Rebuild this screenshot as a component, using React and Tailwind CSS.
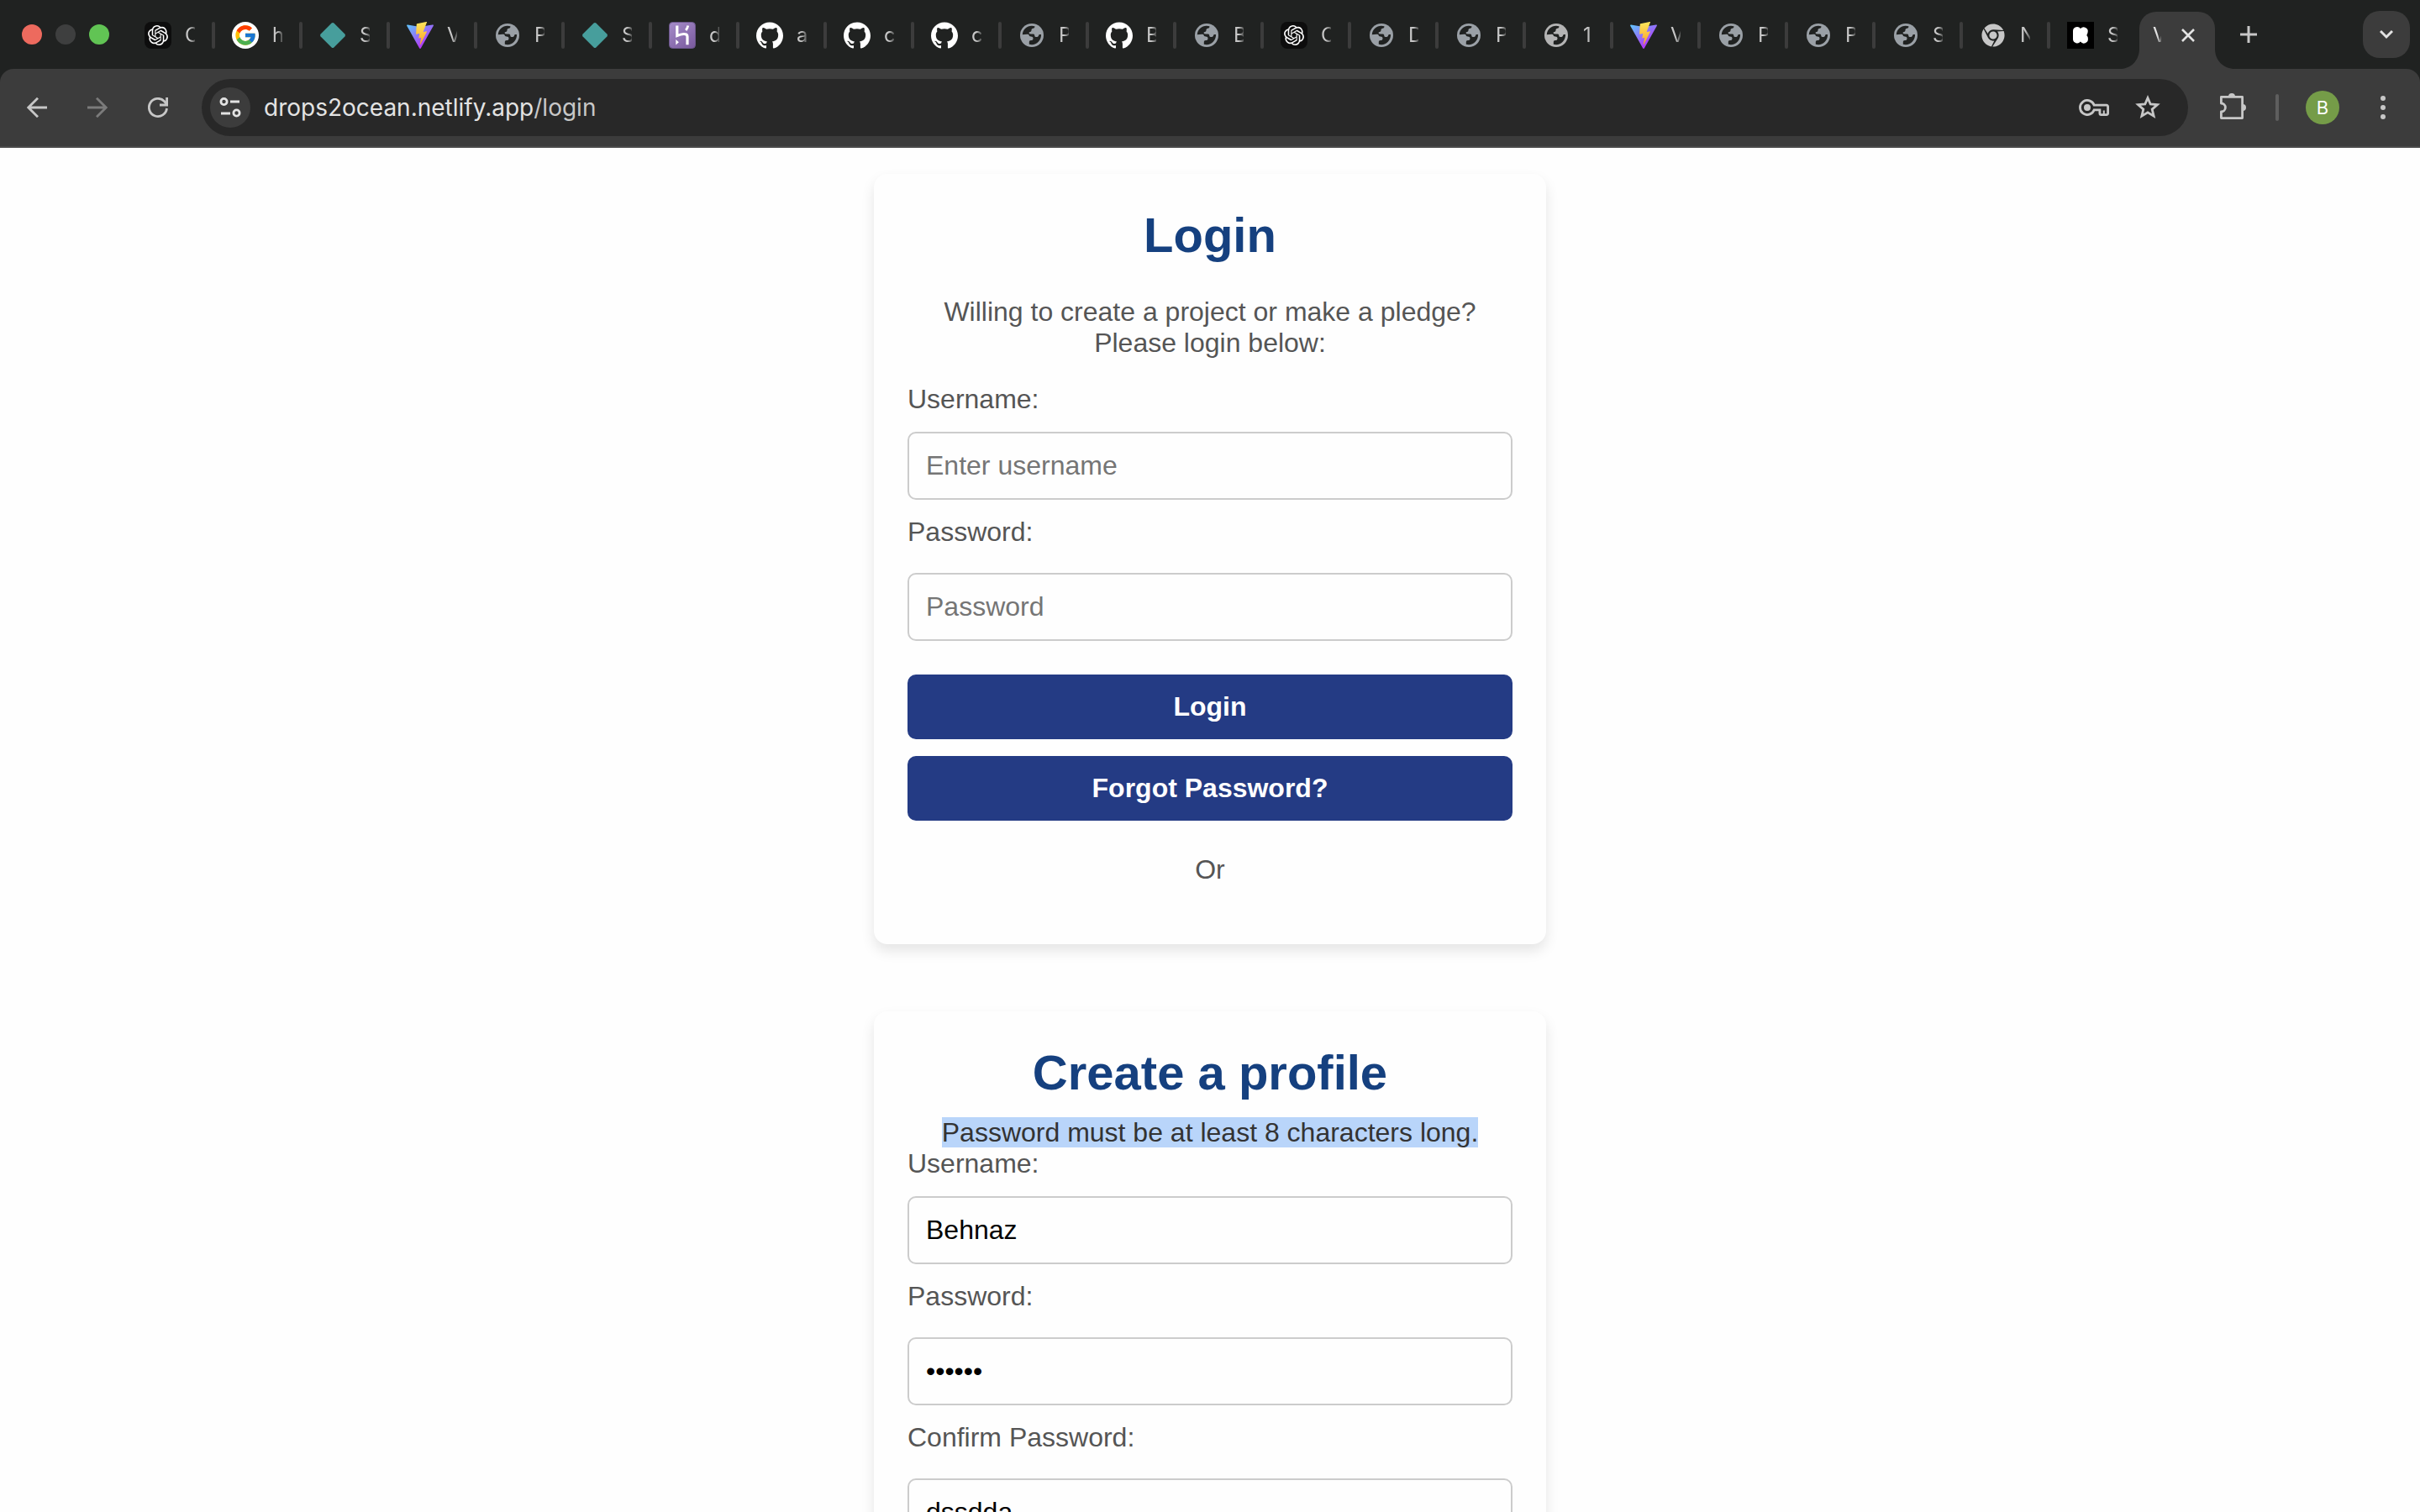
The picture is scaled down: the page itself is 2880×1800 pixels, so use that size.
import { FcGoogle } from "react-icons/fc";
import { SiOpenai, SiGithub } from "react-icons/si";
import { FaChrome } from "react-icons/fa";

function OpenAiIcon() {
  return (
    <span className="flex size-8 items-center justify-center rounded-lg bg-[#0d0d0d]">
      <SiOpenai className="size-6 text-white" />
    </span>
  );
}

function GoogleIcon() {
  return (
    <span className="flex size-8 items-center justify-center rounded-full bg-white">
      <FcGoogle className="size-7" />
    </span>
  );
}

function DiamondIcon() {
  return (
    <svg viewBox="0 0 32 32" className="size-8">
      <path
        d="M14.6 1.6Q16 .4 17.4 1.6L30.4 14.6Q31.6 16 30.4 17.4L17.4 30.4Q16 31.6 14.6 30.4L1.6 17.4Q.4 16 1.6 14.6Z"
        fill="#479e9c"
      />
    </svg>
  );
}

function ViteIcon() {
  return (
    <svg viewBox="0 0 32 32" className="size-8">
      <defs>
        <linearGradient id="vite-body" x1="0" y1="2" x2="19" y2="28" gradientUnits="userSpaceOnUse">
          <stop offset="0" stopColor="#5bcdfd" />
          <stop offset="1" stopColor="#b23bf6" />
        </linearGradient>
        <linearGradient id="vite-bolt" x1="16" y1="1" x2="18" y2="26" gradientUnits="userSpaceOnUse">
          <stop offset="0" stopColor="#ffe45a" />
          <stop offset="1" stopColor="#f9a62b" />
        </linearGradient>
      </defs>
      <path d="M31.8 4.7 16.8 31.4a.9.9 0 0 1-1.6 0L.2 4.7A.9.9 0 0 1 1.1 3.4L16 6l14.8-2.6a.9.9 0 0 1 1 1.3Z" fill="url(#vite-body)" />
      <path d="M23.3.1 12.2 2.2a.5.5 0 0 0-.4.4L11.1 14.3a.4.4 0 0 0 .5.4l3.1-.7a.4.4 0 0 1 .5.5l-.9 4.5a.4.4 0 0 0 .5.5l1.9-.6a.4.4 0 0 1 .5.5L15.7 26.5c-.1.4.5.7.7.3L23.9 11.9a.4.4 0 0 0-.4-.6l-3.2.6a.4.4 0 0 1-.5-.5L23.9.7a.4.4 0 0 0-.6-.6Z" fill="url(#vite-bolt)" />
    </svg>
  );
}

function GlobeIcon({ light }) {
  return (
    <svg viewBox="0 0 32 32" className={light ? "size-8 text-[#b4b4b4]" : "size-8 text-[#9aa0a6]"}>
      <circle cx="16" cy="16" r="14" fill="currentColor" />
      <path
        d="M4.8 15.2C5.2 9.2 10 4.9 16 4.8l3.4.4c.2 1.5-.6 2.2-1.9 2.6-1.3.4-2 .9-2 2.2 0 1.2-.5 1.7-1.6 1.9-1.1.2-1.5.8-1.2 1.7.2.7.9.9 1.9.9h2.6c1.4 0 2 .6 2.1 1.9.1 1.2.8 1.7 2.2 1.7 1.6 0 2.3-.8 2.6-1.9.3-1.1 1.4-1.3 3-.9C27 22 22 27.2 16 27.2l-3.2-.4v-2.6c0-1.5.7-2.2 2.2-2.2 1.7 0 2.5-.8 2.5-2.3 0-1.6-.9-2.3-2.6-2.3-1.5 0-2.2-.7-2.3-1.6-.2-.9-1-1.1-2.3-1.1Z"
        fill="#202221"
      />
    </svg>
  );
}

function HerokuIcon() {
  return (
    <svg viewBox="0 0 32 32" className="size-8">
      <defs>
        <linearGradient id="heroku-bg" x1="4" y1="0" x2="28" y2="32" gradientUnits="userSpaceOnUse">
          <stop offset="0" stopColor="#a48bc8" />
          <stop offset="1" stopColor="#7a5a9e" />
        </linearGradient>
      </defs>
      <rect x=".5" y=".5" width="31" height="31" rx="4" fill="url(#heroku-bg)" stroke="#6b568a" />
      <path d="M9.8 4.5v12c4-1.6 12.2-4 12.2 1v9.7" fill="none" stroke="#fff" strokeWidth="3.2" />
      <path d="M22.8 4.5c-.4 2.1-1.3 3.9-2.6 5.5" fill="none" stroke="#fff" strokeWidth="2.8" />
      <path d="M8.3 21v6.5l3.6-3.2Z" fill="#fff" />
    </svg>
  );
}

function GithubIcon() {
  return <SiGithub className="size-8 text-white" />;
}

function ChromeIcon() {
  return (
    <span className="flex size-8 items-center justify-center">
      <FaChrome className="size-7 text-[#c7c7c7]" />
    </span>
  );
}

function KickstarterIcon() {
  return (
    <svg viewBox="0 0 32 32" className="size-8">
      <rect width="32" height="32" fill="#000" />
      <path
        d="M7 11a5 5 0 0 1 9-3 5 5 0 0 1 8.6 4.5c-.2 1.3-.7 2.4-1.3 3.5 1 1.2 1.6 2.4 1.6 4a5 5 0 0 1-9 3.5A5 5 0 0 1 7 21Z"
        fill="#fff"
      />
    </svg>
  );
}

const ICONS = {
  openai: OpenAiIcon,
  google: GoogleIcon,
  diamond: DiamondIcon,
  vite: ViteIcon,
  globe: GlobeIcon,
  heroku: HerokuIcon,
  github: GithubIcon,
  chrome: ChromeIcon,
  kickstarter: KickstarterIcon,
};

const TABS = [
  ["openai", "C"],
  ["google", "h"],
  ["diamond", "S"],
  ["vite", "V"],
  ["globe", "P"],
  ["diamond", "S"],
  ["heroku", "d"],
  ["github", "a"],
  ["github", "c"],
  ["github", "c"],
  ["globe", "P"],
  ["github", "B"],
  ["globe", "B"],
  ["openai", "C"],
  ["globe", "D"],
  ["globe", "P"],
  ["globe", "1", true],
  ["vite", "V"],
  ["globe", "P"],
  ["globe", "P"],
  ["globe", "S"],
  ["chrome", "N"],
  ["kickstarter", "S"],
];

const titleClass =
  "overflow-hidden text-left text-[24px] leading-[32px] [mask-image:linear-gradient(to_right,black_50%,transparent_120%)]";

function Tab({ icon, title, light, last }) {
  const Icon = ICONS[icon];
  return (
    <button type="button" className="flex h-full w-[104px] items-center pl-5 pt-0.5">
      <Icon light={light} />
      <span className={`${titleClass} ml-4 w-3 text-[#c7c7c7]`}>{title}</span>
      {!last && <span className="ml-auto h-8 w-1 rounded-sm bg-[#3c3c3c]" />}
    </button>
  );
}

function TabFoot({ className, d }) {
  return (
    <svg viewBox="0 0 24 24" className={`absolute bottom-0 size-6 text-[#3c3c3c] ${className}`}>
      <path d={d} fill="currentColor" />
    </svg>
  );
}

function TabStrip() {
  return (
    <div className="flex h-[82px] items-center bg-[#202221]">
      <div className="ml-[26px] mr-[22px] flex gap-4">
        <button type="button" aria-label="Close window" className="size-6 rounded-full bg-[#ed6a5e]" />
        <button type="button" aria-label="Minimise window" className="size-6 rounded-full bg-[#3e3f3f]" />
        <button type="button" aria-label="Zoom window" className="size-6 rounded-full bg-[#61c454]" />
      </div>
      <nav className="flex h-full">
        {TABS.map(([icon, title, light], i) => (
          <Tab key={i} icon={icon} title={title} light={light} last={i === TABS.length - 1} />
        ))}
      </nav>
      <div className="relative ml-0.5 flex h-[68px] w-[90px] items-center justify-between self-end rounded-t-[20px] bg-[#3c3c3c] pb-3 pl-4 pr-6">
        <TabFoot className="-left-6" d="M24 0v24H0C14 24 24 14 24 0Z" />
        <TabFoot className="-right-6" d="M0 0v24h24C10 24 0 14 0 0Z" />
        <span className={`${titleClass} w-2.5 text-[#e3e3e3]`}>V</span>
        <button type="button" aria-label="Close tab">
          <svg viewBox="0 0 16 16" className="size-4">
            <path d="M1 1l14 14M15 1 1 15" stroke="#e3e3e3" strokeWidth="2.6" />
          </svg>
        </button>
      </div>
      <button type="button" aria-label="New tab" className="ml-[30px]">
        <svg viewBox="0 0 20 20" className="size-5">
          <path d="M10 0v20M0 10h20" stroke="#c7c7c7" strokeWidth="3" />
        </svg>
      </button>
      <button
        type="button"
        aria-label="Search tabs"
        className="ml-auto mr-3 flex size-14 items-center justify-center rounded-[20px] bg-[#3c3c3c]"
      >
        <svg viewBox="0 0 16 16" className="size-4">
          <path d="M1 4l7 7 7-7" fill="none" stroke="#e3e3e3" strokeWidth="3" />
        </svg>
      </button>
    </div>
  );
}

function Toolbar() {
  return (
    <div className="bg-[#202221]">
      <div className="flex h-[94px] items-center rounded-t-[16px] border-b-2 border-[#4a4a4a] bg-[#3c3c3c] pl-8 pr-7">
        <button type="button" aria-label="Back">
          <svg viewBox="0 0 24 24" className="size-6">
            <path d="M13 .8 1.8 12 13 23.2M1.8 12H24" fill="none" stroke="#c7c7c7" strokeWidth="2.8" />
          </svg>
        </button>
        <button type="button" aria-label="Forward" className="ml-12">
          <svg viewBox="0 0 24 24" className="size-6">
            <path d="M11 .8 22.2 12 11 23.2M22.2 12H0" fill="none" stroke="#7b7b7b" strokeWidth="2.8" />
          </svg>
        </button>
        <button type="button" aria-label="Reload" className="ml-12">
          <svg viewBox="0 0 24 24" className="size-6">
            <path d="M22.5 13A10.6 10.6 0 1 1 19.5 4.5L22 7.5" fill="none" stroke="#c7c7c7" strokeWidth="2.8" />
            <path d="M22.6 0v9H14" fill="none" stroke="#c7c7c7" strokeWidth="2.8" />
          </svg>
        </button>
        <div className="ml-10 flex h-[68px] flex-1 items-center rounded-full bg-[#282828] pl-2.5 pr-8">
          <button
            type="button"
            aria-label="View site information"
            className="flex size-12 items-center justify-center rounded-full bg-[#3c3c3c]"
          >
            <svg viewBox="0 0 26 24" className="h-6 w-[26px]" fill="none" stroke="#e3e3e3" strokeWidth="2.8">
              <circle cx="5.5" cy="5" r="3.6" />
              <path d="M13 5h11M2 19h11" />
              <circle cx="20.5" cy="18.5" r="3.6" />
            </svg>
          </button>
          <a href="#login" className="ml-4 text-[28px] leading-[36px] text-[#e3e3e3]">
            drops2ocean.netlify.app<span className="text-[#c7c7c7]">/login</span>
          </a>
          <button type="button" aria-label="Manage passwords" className="ml-auto">
            <svg viewBox="0 0 36 20" className="h-5 w-9" fill="none" stroke="#c7c7c7" strokeWidth="2.8">
              <path d="M18.2 7.2H33a1.6 1.6 0 0 1 1.6 1.6V17a1.6 1.6 0 0 1-1.6 1.6h-6.5a1.6 1.6 0 0 1-1.6-1.6v-4.2h-6.7a8.6 8.6 0 1 1 0-5.6Z" />
              <circle cx="10" cy="10" r="4" fill="#c7c7c7" stroke="none" />
              <path d="M29.8 18v-4.5" strokeWidth="2" />
            </svg>
          </button>
          <button type="button" aria-label="Bookmark this tab" className="ml-[30px]">
            <svg viewBox="0 0 32 32" className="size-8">
              <path
                d="M16 4.5 19.2 12l8.2.7-6.2 5.4 1.9 8-7.1-4.3-7.1 4.3 1.9-8-6.2-5.4 8.2-.7Z"
                fill="none"
                stroke="#c7c7c7"
                strokeWidth="2.8"
              />
            </svg>
          </button>
        </div>
        <button type="button" aria-label="Extensions" className="ml-9">
          <svg viewBox="0 0 36 36" className="size-9">
            <path
              d="M3.4 5.4h25.2v25.2H3.4V23a5 5 0 0 0 0-10Z"
              fill="none"
              stroke="#c7c7c7"
              strokeWidth="2.8"
              strokeLinejoin="round"
            />
            <path d="M12 5a4 4 0 0 1 8 0ZM29 14a4 4 0 0 1 0 8Z" fill="#c7c7c7" />
          </svg>
        </button>
        <span className="ml-8 h-8 w-1 rounded-sm bg-[#5e5e5e]" />
        <button
          type="button"
          aria-label="Profile"
          className="ml-8 flex size-10 items-center justify-center rounded-full bg-[#759c48] text-[22px] leading-[24px] text-white"
        >
          B
        </button>
        <button type="button" aria-label="Menu" className="ml-9">
          <svg viewBox="0 0 32 32" className="size-8" fill="#c7c7c7">
            <circle cx="16" cy="5" r="3" />
            <circle cx="16" cy="16" r="3" />
            <circle cx="16" cy="27" r="3" />
          </svg>
        </button>
      </div>
    </div>
  );
}

const cardClass =
  "mx-auto w-full max-w-[800px] rounded-2xl bg-[#fefefe] p-10 shadow-[0_8px_16px_rgba(0,0,0,0.1)]";
const headingClass = "text-center text-[58px] font-bold leading-[66px] text-[#15407f]";
const inputClass =
  "block h-[81px] w-full rounded-[10px] border-2 border-[#cccccc] bg-[#fefefe] px-5 text-black placeholder:text-[#757575]";
const submitClass = "block h-[77px] w-full rounded-[10px] bg-[#243b84] text-center font-bold text-white";

function Field({ id, label, wide, ...input }) {
  return (
    <div className={wide ? "flex flex-col gap-[30px]" : "flex flex-col gap-5"}>
      <label htmlFor={id}>{label}</label>
      <input id={id} className={inputClass} {...input} />
    </div>
  );
}

export default function App() {
  return (
    <div className="flex h-screen flex-col overflow-hidden bg-[#fefefe]">
      <header className="shrink-0 font-[Inter,sans-serif]">
        <TabStrip />
        <Toolbar />
      </header>
      <main className="flex min-h-0 flex-1 flex-col gap-20 overflow-hidden pt-[31px] font-['Liberation_Sans',Arial,sans-serif] text-[32px] leading-[37px] text-[#555555]">
        <section id="login" className={`${cardClass} shrink-0`}>
          <h1 className={headingClass}>Login</h1>
          <p className="mt-10 text-center">
            Willing to create a project or make a pledge?
            <br />
            Please login below:
          </p>
          <form className="mt-[30px] flex flex-col gap-5">
            <Field id="login-username" label="Username:" type="text" placeholder="Enter username" />
            <Field id="login-password" label="Password:" type="password" placeholder="Password" wide />
            <button type="button" className={`${submitClass} mt-5`}>
              Login
            </button>
            <button type="button" className={submitClass}>
              Forgot Password?
            </button>
          </form>
          <p className="mb-[30px] mt-10 text-center">Or</p>
        </section>
        <section className={`${cardClass} shrink-0`}>
          <h1 className={headingClass}>Create a profile</h1>
          <p className="mt-5 text-center text-[#333333]">
            <mark className="bg-[#b9d5fa] text-[#333333]">
              Password must be at least 8 characters long.
            </mark>
          </p>
          <form className="flex flex-col gap-5">
            <Field id="new-username" label="Username:" type="text" defaultValue="Behnaz" />
            <Field id="new-password" label="Password:" type="password" defaultValue="dssdda" wide />
            <Field id="confirm-password" label="Confirm Password:" type="text" defaultValue="dssdda" wide />
          </form>
        </section>
      </main>
    </div>
  );
}
